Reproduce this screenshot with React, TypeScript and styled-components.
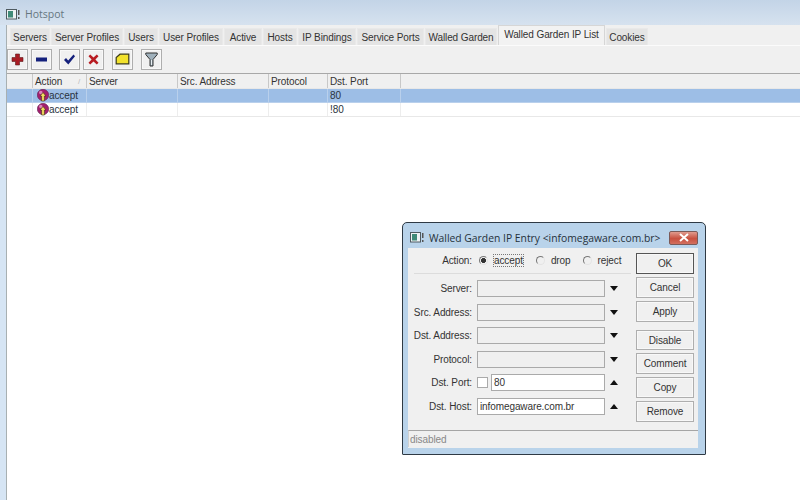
import React from "react";
import styled, { createGlobalStyle } from "styled-components";

const Global = createGlobalStyle`
  html, body { margin: 0; padding: 0; width: 800px; height: 500px; overflow: hidden; background: #fff; }
  * { box-sizing: border-box; }
  body { font-family: "Liberation Sans", Arial, sans-serif; font-size: 10px; letter-spacing: -0.1px; color: #2b2b2b; }
`;

const Page = styled.div`
  position: relative;
  width: 800px;
  height: 500px;
  display: flex;
  flex-direction: column;
  background: #d6e5f4;
  overflow: hidden;
`;

const TitleBar = styled.div`
  height: 25px;
  flex: none;
  display: flex;
  align-items: center;
  gap: 5px;
  padding: 3px 0 0 6px;
  font-family: "Open Sans", sans-serif;
  font-size: 10.5px;
  letter-spacing: 0;
  color: #66767f;
  background: linear-gradient(#c3d4e7, #d6e2ef);
`;

const Body = styled.div`
  flex: 1;
  margin-left: 6px;
  display: flex;
  flex-direction: column;
  background: #f0f0f0;
  border-left: 1px solid #a8b0b2;
  min-height: 0;
`;

const TabStrip = styled.div`
  height: 21px;
  flex: none;
  display: flex;
  align-items: flex-end;
  padding-left: 3px;
  gap: 1px;
  background: #f0f0f0;
  border-bottom: 1px solid #fbfbfb;
`;

const Tab = styled.div<{ $w: number; $active?: boolean }>`
  width: ${(p) => p.$w}px;
  height: ${(p) => (p.$active ? 20 : 17)}px;
  flex: none;
  display: flex;
  align-items: center;
  justify-content: center;
  white-space: nowrap;
  padding-bottom: ${(p) => (p.$active ? 3 : 0)}px;
  background: ${(p) => (p.$active ? "#f2f2f2" : "#e4e4e4")};
  border: 1px solid ${(p) => (p.$active ? "#d6d6d6" : "#e9e9e9")};
  border-bottom: 0;
  color: #333;
`;

const Toolbar = styled.div`
  height: 27px;
  flex: none;
  display: flex;
  align-items: center;
  padding-bottom: 1px;
`;

const ToolButton = styled.div<{ $gap?: number }>`
  width: 21px;
  height: 21px;
  flex: none;
  margin-left: ${(p) => p.$gap ?? 0}px;
  display: flex;
  align-items: center;
  justify-content: center;
  background: #f0f0f0;
  border: 1px solid #aeaeae;
  box-shadow: inset 0 0 0 1px #f8f8f8;
`;

const Table = styled.div`
  flex: 1;
  display: flex;
  flex-direction: column;
  background: #fff;
  border-top: 1px solid #a8a8a8;
  min-height: 0;
`;

const Row = styled.div<{ $bg: string; $h: number }>`
  height: ${(p) => p.$h}px;
  flex: none;
  display: grid;
  grid-template-columns: 26px 54px 91px 91px 59px 73px 1fr;
  background: ${(p) => p.$bg};
  border-bottom: 1px solid ${(p) => (p.$bg === "#9dbee6" ? "#b9d0ec" : "#e8e8e8")};
`;

const HeadCell = styled.div`
  display: flex;
  align-items: center;
  justify-content: space-between;
  padding: 0 2px;
  border-right: 1px solid #c8c8c8;
  color: #333;
  &:last-child { border-right: 0; }
`;

const Cell = styled.div<{ $light?: boolean }>`
  display: flex;
  align-items: center;
  padding: 0 2px;
  color: #2a3340;
  border-right: 1px solid ${(p) => (p.$light ? "#ededed" : "#b9d0ec")};
  white-space: nowrap;
  &:last-child { border-right: 0; }
`;

const SortMark = styled.span`
  font-size: 8px;
  color: #bbb;
  margin-right: 4px;
`;

const Dialog = styled.div`
  position: absolute;
  left: 402px;
  top: 222px;
  width: 304px;
  height: 233px;
  display: flex;
  flex-direction: column;
  background: #b9d3ea;
  border: 1px solid #2f3a44;
  border-radius: 5px 5px 1px 1px;
  padding: 0 7px 6px 5px;
`;

const DialogTitle = styled.div`
  height: 25px;
  flex: none;
  display: flex;
  align-items: center;
  gap: 5px;
  padding: 4px 0 0 2px;
  font-family: "Open Sans", sans-serif;
  font-size: 10.35px;
  letter-spacing: 0;
  white-space: nowrap;
  color: #26313a;
`;

const CloseButton = styled.div`
  margin-left: auto;
  width: 29px;
  height: 14px;
  display: flex;
  align-items: center;
  justify-content: center;
  border: 1px solid #7b5a58;
  border-radius: 2px;
  background: linear-gradient(#e09b8e, #c8503f 55%, #d2705f);
`;

const DialogBody = styled.div`
  flex: 1;
  display: flex;
  flex-direction: column;
  background: #f0f0f0;
  padding: 5px 4px 1px 0;
  min-height: 0;
`;

const DialogMain = styled.div`
  flex: 1;
  display: flex;
  gap: 5px;
  min-height: 0;
`;

const FormColumn = styled.div`
  width: 223px;
  flex: none;
  display: flex;
  flex-direction: column;
`;

const ActionRow = styled.div`
  height: 15px;
  margin-bottom: 5px;
  display: flex;
  align-items: center;
`;

const Divider = styled.div`
  height: 1px;
  margin: 0 0 6px 6px;
  background: #dcdcdc;
`;

const FormRow = styled.div`
  height: 23.6px;
  flex: none;
  display: flex;
  align-items: flex-start;
`;

const Label = styled.div`
  width: 64px;
  height: 17px;
  flex: none;
  display: flex;
  align-items: center;
  justify-content: flex-end;
  white-space: nowrap;
  color: #333;
`;

const Radio = styled.div<{ $gap: number; $on?: boolean }>`
  width: 9px;
  height: 9px;
  flex: none;
  margin-left: ${(p) => p.$gap}px;
  margin-right: 6px;
  border-radius: 50%;
  background: ${(p) => (p.$on ? "radial-gradient(circle, #333 0 2.2px, transparent 2.8px)" : "transparent")};
  border: 1px solid;
  border-color: #777 #e4e4e4 #e4e4e4 #777;
`;

const RadioText = styled.span<{ $focus?: boolean }>`
  color: #333;
  outline: ${(p) => (p.$focus ? "1px dotted #777" : "0")};
`;

const Field = styled.div<{ $w: number; $on?: boolean; $gap?: number }>`
  width: ${(p) => p.$w}px;
  height: 17px;
  flex: none;
  margin-left: ${(p) => p.$gap ?? 5}px;
  display: flex;
  align-items: center;
  padding-left: 2px;
  background: ${(p) => (p.$on ? "#fff" : "#f0f0f0")};
  border: 1px solid #aaa;
  color: #333;
`;

const Check = styled.div`
  width: 11px;
  height: 11px;
  margin: 3px 0 0 5px;
  flex: none;
  background: #fff;
  border: 1px solid #aaa;
`;

const Arrow = styled.div<{ $up?: boolean }>`
  width: 0;
  height: 0;
  margin: 6px 0 0 5px;
  flex: none;
  border-left: 4px solid transparent;
  border-right: 4px solid transparent;
  ${(p) => (p.$up ? "border-bottom: 5px solid #111;" : "border-top: 5px solid #111;")}
`;

const ButtonColumn = styled.div`
  width: 58px;
  flex: none;
  display: flex;
  flex-direction: column;
  gap: 3px;
`;

const DButton = styled.div<{ $gap?: number; $h?: number; $primary?: boolean }>`
  height: ${(p) => p.$h ?? 21}px;
  flex: none;
  margin-top: ${(p) => p.$gap ?? 0}px;
  display: flex;
  align-items: center;
  justify-content: center;
  background: #f0f0f0;
  border: 1px solid ${(p) => (p.$primary ? "#555" : "#aeaeae")};
  box-shadow: inset 0 0 0 1px #f8f8f8;
  color: #333;
`;

const Status = styled.div`
  height: 17px;
  flex: none;
  display: flex;
  align-items: center;
  padding-left: 1px;
  margin-right: -4px;
  border-top: 1px solid #a5a5a5;
  border-left: 1px solid #d0d0d0;
  color: #888;
`;

const WinIcon = () => (
  <svg width="14" height="11" viewBox="0 0 14 11">
    <rect x="0.5" y="0.5" width="10" height="9.5" fill="#eef2f4" stroke="#4e5a60" />
    <rect x="2" y="2" width="5" height="6.5" fill="#3f8a78" />
    <rect x="12" y="1" width="1.5" height="5" fill="#555" />
    <rect x="12" y="8" width="1.5" height="2" fill="#555" />
  </svg>
);

const Plus = () => (
  <svg width="13" height="13" viewBox="0 0 13 13"><path d="M4.5 1h4v3.5H12v4H8.5V12h-4V8.5H1v-4h3.5z" fill="#a81c24" stroke="#5f1c1c" strokeWidth=".6" /></svg>
);
const Minus = () => (
  <svg width="13" height="13" viewBox="0 0 13 13"><rect x="1" y="4.5" width="11" height="4" fill="#14207c" /></svg>
);
const Tick = () => (
  <svg width="13" height="13" viewBox="0 0 13 13"><path d="M1 7l2-2 2.2 2.4L10.5 1.5 12 3.2 5.3 11.5z" fill="#14207c" /></svg>
);
const Cross = () => (
  <svg width="13" height="13" viewBox="0 0 13 13"><path d="M1.5 3.2L3.2 1.5 6.5 4.6 9.8 1.5l1.7 1.7L8.4 6.5l3.1 3.3-1.7 1.7-3.3-3.1-3.3 3.1-1.7-1.7 3.1-3.3z" fill="#b81c22" /></svg>
);
const Note = () => (
  <svg width="15" height="12" viewBox="0 0 15 12"><path d="M5 1.2h8.8v9.6H1.2V4.5z" fill="#f2e22c" stroke="#3c3c18" strokeWidth="1.2" /></svg>
);
const Filter = () => (
  <svg width="13" height="15" viewBox="0 0 13 15"><path d="M.8 1h11.4v1.6L8 7.5V14H5V7.5L.8 2.6z" fill="#9fb0bb" stroke="#333" /><path d="M6 8h1v5H6z" fill="#e8eef2" /></svg>
);
const CloseX = () => (
  <svg width="10" height="9" viewBox="0 0 10 9"><path d="M1 1l8 7M9 1L1 8" stroke="#fff" strokeWidth="2" /></svg>
);
const Accept = () => (
  <svg width="12" height="13" viewBox="0 0 12 13" style={{ flex: "none", marginLeft: 2 }}>
    <circle cx="6" cy="6" r="5.7" fill="#a31f6e" stroke="#5f2050" strokeWidth=".6" />
    <circle cx="3.8" cy="3.5" r="1.8" fill="#dc86b8" />
    <path d="M6 3.5L9 7H7.4v5H4.6V7H3z" fill="#f4dc60" stroke="#3a3010" strokeWidth=".6" />
  </svg>
);

const tabs: [string, number][] = [
  ["Servers", 40], ["Server Profiles", 72], ["Users", 34], ["User Profiles", 64], ["Active", 38],
  ["Hosts", 34], ["IP Bindings", 58], ["Service Ports", 67], ["Walled Garden", 72],
];

const rows = [
  { bg: "#9dbee6", port: "80", light: false },
  { bg: "#ffffff", port: "!80", light: true },
];

const fields = ["Server:", "Src. Address:", "Dst. Address:", "Protocol:"];

export default function App() {
  return (
    <Page>
      <Global />
      <TitleBar><WinIcon />Hotspot</TitleBar>
      <Body>
        <TabStrip>
          {tabs.map(([t, w]) => <Tab key={t} $w={w}>{t}</Tab>)}
          <Tab $w={107} $active>Walled Garden IP List</Tab>
          <Tab $w={42}>Cookies</Tab>
        </TabStrip>
        <Toolbar>
          <ToolButton><Plus /></ToolButton>
          <ToolButton $gap={3}><Minus /></ToolButton>
          <ToolButton $gap={7}><Tick /></ToolButton>
          <ToolButton $gap={3}><Cross /></ToolButton>
          <ToolButton $gap={8}><Note /></ToolButton>
          <ToolButton $gap={8}><Filter /></ToolButton>
        </Toolbar>
        <Table>
          <Row $bg="#f0f0f0" $h={15}>
            <HeadCell />
            <HeadCell>Action<SortMark>/</SortMark></HeadCell>
            <HeadCell>Server</HeadCell>
            <HeadCell>Src. Address</HeadCell>
            <HeadCell>Protocol</HeadCell>
            <HeadCell>Dst. Port</HeadCell>
            <HeadCell />
          </Row>
          {rows.map((r) => (
            <Row key={r.port} $bg={r.bg} $h={14}>
              <Cell $light={r.light} />
              <Cell $light={r.light}><Accept />accept</Cell>
              <Cell $light={r.light} />
              <Cell $light={r.light} />
              <Cell $light={r.light} />
              <Cell $light={r.light}>{r.port}</Cell>
              <Cell $light={r.light} />
            </Row>
          ))}
        </Table>
      </Body>
      <Dialog>
        <DialogTitle>
          <WinIcon />Walled Garden IP Entry &lt;infomegaware.com.br&gt;
          <CloseButton><CloseX /></CloseButton>
        </DialogTitle>
        <DialogBody>
          <DialogMain>
            <FormColumn>
              <ActionRow>
                <Label>Action:</Label>
                <Radio $gap={7} $on />
                <RadioText $focus>accept</RadioText>
                <Radio $gap={13} />
                <RadioText>drop</RadioText>
                <Radio $gap={12} />
                <RadioText>reject</RadioText>
              </ActionRow>
              <Divider />
              {fields.map((f) => (
                <FormRow key={f}>
                  <Label>{f}</Label>
                  <Field $w={128} />
                  <Arrow />
                </FormRow>
              ))}
              <FormRow>
                <Label>Dst. Port:</Label>
                <Check />
                <Field $w={114} $gap={3} $on>80</Field>
                <Arrow $up />
              </FormRow>
              <FormRow>
                <Label>Dst. Host:</Label>
                <Field $w={128} $on>infomegaware.com.br</Field>
                <Arrow $up />
              </FormRow>
            </FormColumn>
            <ButtonColumn>
              <DButton $primary>OK</DButton>
              <DButton>Cancel</DButton>
              <DButton>Apply</DButton>
              <DButton $gap={5} $h={20}>Disable</DButton>
              <DButton>Comment</DButton>
              <DButton>Copy</DButton>
              <DButton>Remove</DButton>
            </ButtonColumn>
          </DialogMain>
          <Status>disabled</Status>
        </DialogBody>
      </Dialog>
    </Page>
  );
}
